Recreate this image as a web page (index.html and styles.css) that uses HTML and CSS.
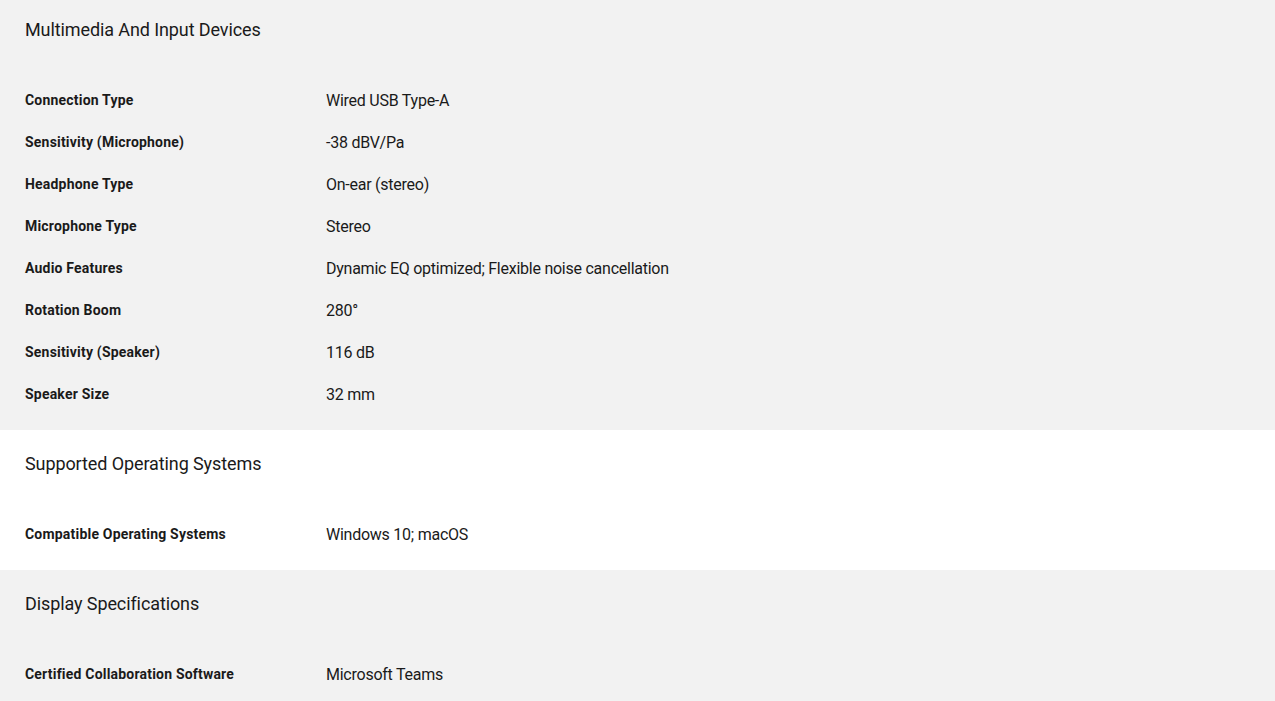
FILE: index.html
```html
<!DOCTYPE html>
<html>
<head>
<meta charset="utf-8">
<link rel="stylesheet" href="styles.css">
</head>
<body>
<div class="page">
  <section class="spec grey">
    <h2 class="spec-title">Multimedia And Input Devices</h2>
    <div class="rows">
      <div class="row"><div class="label">Connection Type</div><div class="value">Wired USB Type-A</div></div>
      <div class="row"><div class="label">Sensitivity (Microphone)</div><div class="value">-38 dBV/Pa</div></div>
      <div class="row"><div class="label">Headphone Type</div><div class="value">On-ear (stereo)</div></div>
      <div class="row"><div class="label">Microphone Type</div><div class="value">Stereo</div></div>
      <div class="row"><div class="label">Audio Features</div><div class="value">Dynamic EQ optimized; Flexible noise cancellation</div></div>
      <div class="row"><div class="label">Rotation Boom</div><div class="value">280°</div></div>
      <div class="row"><div class="label">Sensitivity (Speaker)</div><div class="value">116 dB</div></div>
      <div class="row"><div class="label">Speaker Size</div><div class="value">32 mm</div></div>
    </div>
  </section>
  <section class="spec white">
    <h2 class="spec-title">Supported Operating Systems</h2>
    <div class="rows">
      <div class="row"><div class="label">Compatible Operating Systems</div><div class="value">Windows 10; macOS</div></div>
    </div>
  </section>
  <section class="spec grey">
    <h2 class="spec-title">Display Specifications</h2>
    <div class="rows">
      <div class="row"><div class="label">Certified Collaboration Software</div><div class="value">Microsoft Teams</div></div>
    </div>
  </section>
</div>
</body>
</html>
```

FILE: styles.css
```css
* { box-sizing: border-box; }
html, body { margin: 0; padding: 0; background: #f2f2f2; }
body {
  font-family: Roboto, "Liberation Sans", sans-serif;
  color: #1a1a1a;
  overflow: hidden;
}
.page { margin-top: -4px; }
.spec { padding: 20px 25px 15px; }
.grey { background: #f2f2f2; }
.white { background: #ffffff; }
.spec-title {
  margin: 0 0 35px;
  font-size: 18px;
  line-height: 28px;
  font-weight: 400;
  letter-spacing: -0.1px;
}
.rows { display: flex; flex-direction: column; }
.row {
  display: grid;
  grid-template-columns: 301px 1fr;
  height: 42px;
  align-items: center;
}
.label {
  font-size: 14px;
  font-weight: 700;
  letter-spacing: 0.2px;
}
.value {
  font-size: 16px;
  font-weight: 400;
  letter-spacing: -0.25px;
}
```
